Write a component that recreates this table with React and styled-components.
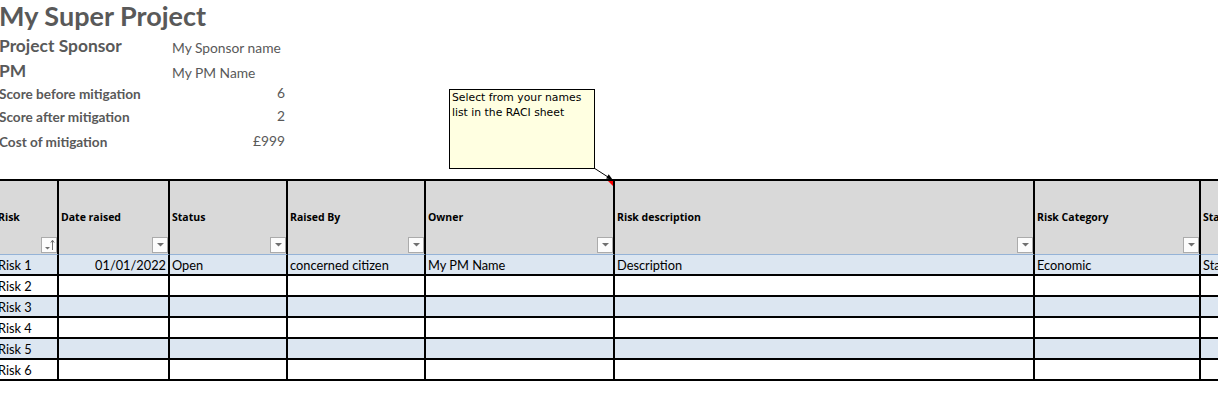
import React from 'react';
import styled, { createGlobalStyle } from 'styled-components';

const GlobalStyle = createGlobalStyle`
  html, body {
    margin: 0;
    padding: 0;
    background: #fff;
  }
  body {
    overflow: hidden;
  }
`;

const Sheet = styled.div`
  position: relative;
  width: 1218px;
  height: 396px;
  overflow: hidden;
  background: #fff;
`;

const Summary = styled.div`
  margin-left: -1px;
  font-family: Lato, "Open Sans", sans-serif;
  color: #595959;
`;

const InfoRow = styled.div`
  display: grid;
  grid-template-columns: 173px 113px;
  align-items: end;
  height: ${p => p.$h}px;
  white-space: nowrap;
`;

const Title = styled.div`
  font-size: 27px;
  font-weight: 700;
  line-height: 1.2;
`;

const Label = styled.div`
  font-size: ${p => p.$size}px;
  font-weight: 700;
  line-height: 1.2;
`;

const Value = styled.div`
  font-size: 13.8px;
  line-height: 1.2;
  text-align: ${p => p.$align || 'left'};
`;

const Table = styled.div`
  display: grid;
  grid-template-columns: 63px 111px 118px 138px 189px 420px 166px 120px;
  width: max-content;
  margin: 29px 0 0 -4px;
  border-top: 2px solid #000;
`;

const HeadCell = styled.div`
  position: relative;
  box-sizing: border-box;
  height: 74px;
  display: flex;
  align-items: center;
  padding: 0 2px 1px;
  background: #d9d9d9;
  border-right: 2px solid #000;
  border-bottom: 1px solid #95b3d7;
  font-family: "Open Sans", sans-serif;
  font-size: 10.5px;
  font-weight: 700;
  color: #000;
  white-space: nowrap;
`;

const FilterButton = styled.span`
  position: absolute;
  right: 0;
  bottom: 1px;
  box-sizing: border-box;
  width: 16px;
  height: 16px;
  display: flex;
  align-items: center;
  justify-content: center;
  border: 1px solid #ababab;
  background: #fcfcfc;
`;

const CommentMark = styled.span`
  position: absolute;
  top: 0;
  right: 0;
  width: 0;
  height: 0;
  border-top: 5px solid #ff0000;
  border-left: 5px solid transparent;
`;

const Cell = styled.div`
  box-sizing: border-box;
  height: 21px;
  padding: 0 2px;
  background: ${p => (p.$shade ? '#dce6f1' : '#fff')};
  border-right: 2px solid #000;
  border-bottom: 2px solid #000;
  font-family: Lato, "Open Sans", sans-serif;
  font-size: 12.8px;
  line-height: 21px;
  color: #000;
  text-align: ${p => p.$align || 'left'};
  white-space: nowrap;
  overflow: hidden;
`;

const Note = styled.div`
  position: absolute;
  left: 449px;
  top: 89px;
  box-sizing: border-box;
  width: 146px;
  height: 80px;
  padding: 0 2px;
  border: 1px solid #000;
  background: #ffffe1;
  font-family: "DejaVu Sans", sans-serif;
  font-size: 10.8px;
  line-height: 15px;
  color: #000;
`;

const Pointer = styled.svg`
  position: absolute;
  left: 590px;
  top: 165px;
  overflow: visible;
`;

const columns = [
  { title: 'Risk', sorted: true },
  { title: 'Date raised', align: 'right' },
  { title: 'Status' },
  { title: 'Raised By' },
  { title: 'Owner', note: true },
  { title: 'Risk description' },
  { title: 'Risk Category' },
  { title: 'Status' },
];

const rows = [
  ['Risk 1', '01/01/2022', 'Open', 'concerned citizen', 'My PM Name', 'Description', 'Economic', 'Started'],
  ['Risk 2'],
  ['Risk 3'],
  ['Risk 4'],
  ['Risk 5'],
  ['Risk 6'],
];

const DropIcon = () => (
  <svg width="7" height="4" viewBox="0 0 7 4">
    <path d="M0 0H7L3.5 3.5Z" fill="#6f6f6f" />
  </svg>
);

const SortedIcon = () => (
  <svg width="14" height="14" viewBox="0 0 14 14">
    <path d="M3 9H8L5.5 11.5Z" fill="#6f6f6f" />
    <path d="M10.5 2.5V12" stroke="#6f6f6f" strokeWidth="1" />
    <path d="M8.8 4.6L10.5 2.2L12.2 4.6" stroke="#6f6f6f" strokeWidth="1" fill="none" />
  </svg>
);

const App = () => {
  return (
    <Sheet>
      <GlobalStyle />
      <Summary>
        <InfoRow $h={30}>
          <Title>My Super Project</Title>
        </InfoRow>
        <InfoRow $h={27}>
          <Label $size={17.4}>Project Sponsor</Label>
          <Value>My Sponsor name</Value>
        </InfoRow>
        <InfoRow $h={25}>
          <Label $size={17.4}>PM</Label>
          <Value>My PM Name</Value>
        </InfoRow>
        <InfoRow $h={20}>
          <Label $size={13.6}>Score before mitigation</Label>
          <Value $align="right">6</Value>
        </InfoRow>
        <InfoRow $h={23}>
          <Label $size={13.6}>Score after mitigation</Label>
          <Value $align="right">2</Value>
        </InfoRow>
        <InfoRow $h={25}>
          <Label $size={13.6}>Cost of mitigation</Label>
          <Value $align="right">£999</Value>
        </InfoRow>
      </Summary>

      <Table>
        {columns.map((col, i) => (
          <HeadCell key={'h' + i}>
            {col.title}
            {col.note && <CommentMark />}
            <FilterButton>{col.sorted ? <SortedIcon /> : <DropIcon />}</FilterButton>
          </HeadCell>
        ))}
        {rows.map((row, r) =>
          columns.map((col, c) => (
            <Cell key={r + '-' + c} $shade={r % 2 === 0} $align={col.align}>
              {row[c] || ''}
            </Cell>
          ))
        )}
      </Table>

      <Note>
        Select from your names
        <br />
        list in the RACI sheet
      </Note>
      <Pointer width="30" height="22" viewBox="0 0 30 22">
        <path d="M4 3L18 12" stroke="#000" strokeWidth="1" />
        <path d="M16.1 13.4L18.7 9.2L22.5 14.5Z" fill="#000" />
      </Pointer>
    </Sheet>
  );
};

export default App;
